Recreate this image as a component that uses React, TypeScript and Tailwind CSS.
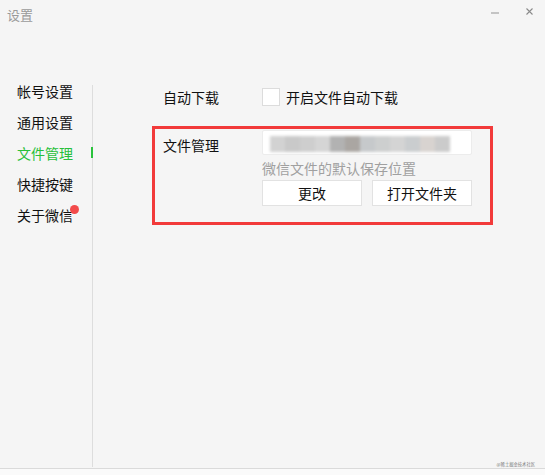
import * as React from 'react';

const menu = ['帐号设置', '通用设置', '文件管理', '快捷按键', '关于微信'];

const blurBlocks = [
  'bg-[#d2d2d2]', 'bg-[#c9c9c9]', 'bg-[#cecece]', 'bg-[#d5d5d5]', 'bg-[#b2b2b2]', 'bg-[#aaa6a2]',
  'bg-[#c6c9cb]', 'bg-[#cdcfcf]', 'bg-[#d4d4d4]', 'bg-[#cacdcf]', 'bg-[#d8d3d0]', 'bg-[#cbcbcb]',
];

export default function App() {
  return <div className="w-[545px] h-[475px] bg-[#fafafa] text-[14px] text-[#111] font-['Noto_Sans_CJK_SC','Microsoft_YaHei',sans-serif]">
    <div className="h-[469px] bg-[#f5f5f5] border-b border-[#dadada] flex flex-col">

      {/* title bar */}
      <div className="h-[76px] flex items-start">
        <div className="pl-[7px] pt-[5px] text-[13px] leading-[20px] text-[#9a9a9a]">设置</div>
        <div className="ml-auto flex pt-[11px] pr-[12px]">
          <div className="w-[8px] h-[2px] bg-[#c4c4c4] mt-[1px]"></div>
          <div className="ml-[27px] -mt-[3px]">
            <svg width="7" height="7" viewBox="0 0 7 7">
              <path d="M0.5 0.5 L6.5 6.5 M6.5 0.5 L0.5 6.5" stroke="#8a8a8a" strokeWidth="1.1" />
            </svg>
          </div>
        </div>
      </div>

      <div className="flex flex-1">
        {/* side menu */}
        <div className="w-[92px] pl-[17px]">
          {menu.map((m, i) => (
            <div key={m} className={'h-[31px] leading-[31px] relative ' + (i == 2 ? 'text-[#27bf3a]' : '')}>
              {m}
              {i == 4 ? <div className="absolute left-[53px] top-[5px] w-[9px] h-[9px] rounded-full bg-[#f24b4b]"></div> : null}
            </div>
          ))}
        </div>
        <div className="relative w-px bg-[#dddddd] mt-[9px] mb-[1px]">
          <div className="absolute left-[-1px] top-[62px] w-[2px] h-[11px] bg-[#2ac23c]"></div>
        </div>

        {/* content */}
        <div className="flex-1 pl-[70px]">
          <div className="flex items-center mt-[12px] h-[18px]">
            <div className="w-[99px]">自动下载</div>
            <div className="w-[18px] h-[18px] bg-white border border-[#dcdcdc]"></div>
            <div className="ml-[6px]">开启文件自动下载</div>
          </div>

          <div className="-ml-[11px] mt-[20px] w-[341px] h-[99px] border-[3px] border-[#f23a3a] pl-[8px] pt-[1px] flex">
            <div className="w-[99px] pt-[4px] leading-[22px]">文件管理</div>
            <div className="flex flex-col">
              <div className="w-[210px] h-[25px] bg-white border border-[#ececec] rounded-[2px] overflow-hidden flex items-center pl-[7px]">
                <div className="flex blur-[1.5px] h-[16px] mt-[2px]">
                  {blurBlocks.map((c, i) => <div key={i} className={'w-[15px] h-full ' + c}></div>)}
                </div>
              </div>
              <div className="mt-[1px] h-[24px] leading-[24px] text-[#a0a0a0]">微信文件的默认保存位置</div>
              <div className="flex gap-[10px]">
                <div className="w-[100px] h-[26px] bg-white border border-[#e2e2e2] flex items-center justify-center">更改</div>
                <div className="w-[100px] h-[26px] bg-white border border-[#e2e2e2] flex items-center justify-center">打开文件夹</div>
              </div>
            </div>
          </div>

          <div className="flex justify-end pr-[10px] mt-[236px] text-[4.3px] leading-[6px] text-[#7a7a7a]">@稀土掘金技术社区</div>
        </div>
      </div>
    </div>
  </div>
}
